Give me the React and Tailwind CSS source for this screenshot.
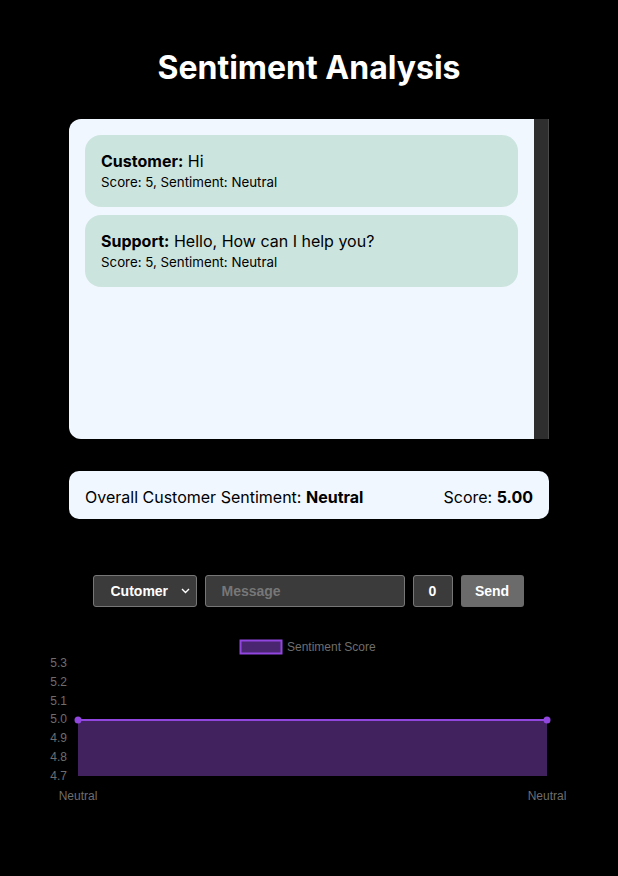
import { useState } from "react";

const messages = [
  { who: "Customer", text: "Hi", score: 5, sentiment: "Neutral" },
  { who: "Support", text: "Hello, How can I help you?", score: 5, sentiment: "Neutral" },
];

const ctrlCls = "h-8 bg-[#3b3b3b] border border-[#777] rounded-[3px] text-white text-sm font-bold outline-none";

function Chart() {
  const ticks = ["5.3", "5.2", "5.1", "5.0", "4.9", "4.8", "4.7"];
  const top = 32;
  const step = 18.83;
  return (
    <svg width="618" height="190" className="block" style={{ fontFamily: '"Liberation Sans", Arial, sans-serif' }}>
      <rect x="240.5" y="9.5" width="41" height="13" fill="#4a2570" stroke="#9146e0" strokeWidth="2" />
      <text x="287" y="20" fontSize="12" fill="#6e6e6e">Sentiment Score</text>
      {ticks.map((t, i) => (
        <text key={t} x="67" y={top + i * step + 4} fontSize="12" fill="#6e6e6e" textAnchor="end">{t}</text>
      ))}
      <rect x="78" y="89" width="469" height="56" fill="#42215f" />
      <line x1="78" y1="89" x2="547" y2="89" stroke="#9146e0" strokeWidth="2" />
      <circle cx="78" cy="89" r="3.5" fill="#9146e0" />
      <circle cx="547" cy="89" r="3.5" fill="#9146e0" />
      <text x="78" y="169" fontSize="12" fill="#6e6e6e" textAnchor="middle">Neutral</text>
      <text x="547" y="169" fontSize="12" fill="#6e6e6e" textAnchor="middle">Neutral</text>
    </svg>
  );
}

export default function App() {
  const [who, setWho] = useState("Cutomer");
  const [msg, setMsg] = useState("");

  return (
    <div className="min-h-[876px] bg-black flex flex-col items-center" style={{ fontFamily: "Inter, sans-serif" }}>
      <h1 className="mt-[48px] h-[40px] leading-[40px] text-[32px] font-bold text-white">Sentiment Analysis</h1>

      <div className="mt-[31px] w-[480px] h-[320px] bg-[#f0f7ff] rounded-l-xl flex overflow-hidden">
        <div className="flex-1 p-4 flex flex-col gap-2">
          {messages.map((m) => (
            <div key={m.who} className="bg-[#cce4de] rounded-2xl px-4 h-[72px] flex flex-col justify-center text-black">
              <p className="text-base leading-5">
                <span className="font-bold">{m.who}:</span> {m.text}
              </p>
              <p className="text-[13.3px] leading-5 mt-[1px]">Score: {m.score}, Sentiment: {m.sentiment}</p>
            </div>
          ))}
        </div>
        <div className="w-[15px] bg-[#2e2e2e] border-r border-[#4a4a4a]" />
      </div>

      <div className="mt-[32px] w-[480px] h-[48px] bg-[#f0f7ff] rounded-[10px] px-4 pt-1 flex items-center justify-between text-base text-black">
        <span>Overall Customer Sentiment: <b>Neutral</b></span>
        <span>Score: <b>5.00</b></span>
      </div>

      <div className="mt-[56px] mr-[2px] flex gap-2" style={{ fontFamily: '"Liberation Sans", Arial, sans-serif' }}>
        <div className="relative">
          <select
            value={who}
            onChange={(e) => setWho(e.target.value)}
            className={ctrlCls + " w-[104px] pl-[17px] appearance-none"}
          >
            <option>Cutomer</option>
            <option>Support</option>
          </select>
          <svg className="absolute right-[7px] top-[13px] pointer-events-none" width="9" height="6" viewBox="0 0 9 6">
            <path d="M1 1l3.5 3.5L8 1" stroke="#fff" strokeWidth="1.4" fill="none" />
          </svg>
        </div>
        <input
          value={msg}
          onChange={(e) => setMsg(e.target.value)}
          placeholder="Message"
          className={ctrlCls + " w-[200px] px-4 placeholder:text-[#777]"}
        />
        <div className={ctrlCls + " w-[40px] flex items-center justify-center"}>0</div>
        <button className="h-8 w-[63px] bg-[#6b6b6b] rounded-[3px] text-white text-sm font-bold">Send</button>
      </div>

      <div className="mt-[24px]">
        <Chart />
      </div>
    </div>
  );
}
